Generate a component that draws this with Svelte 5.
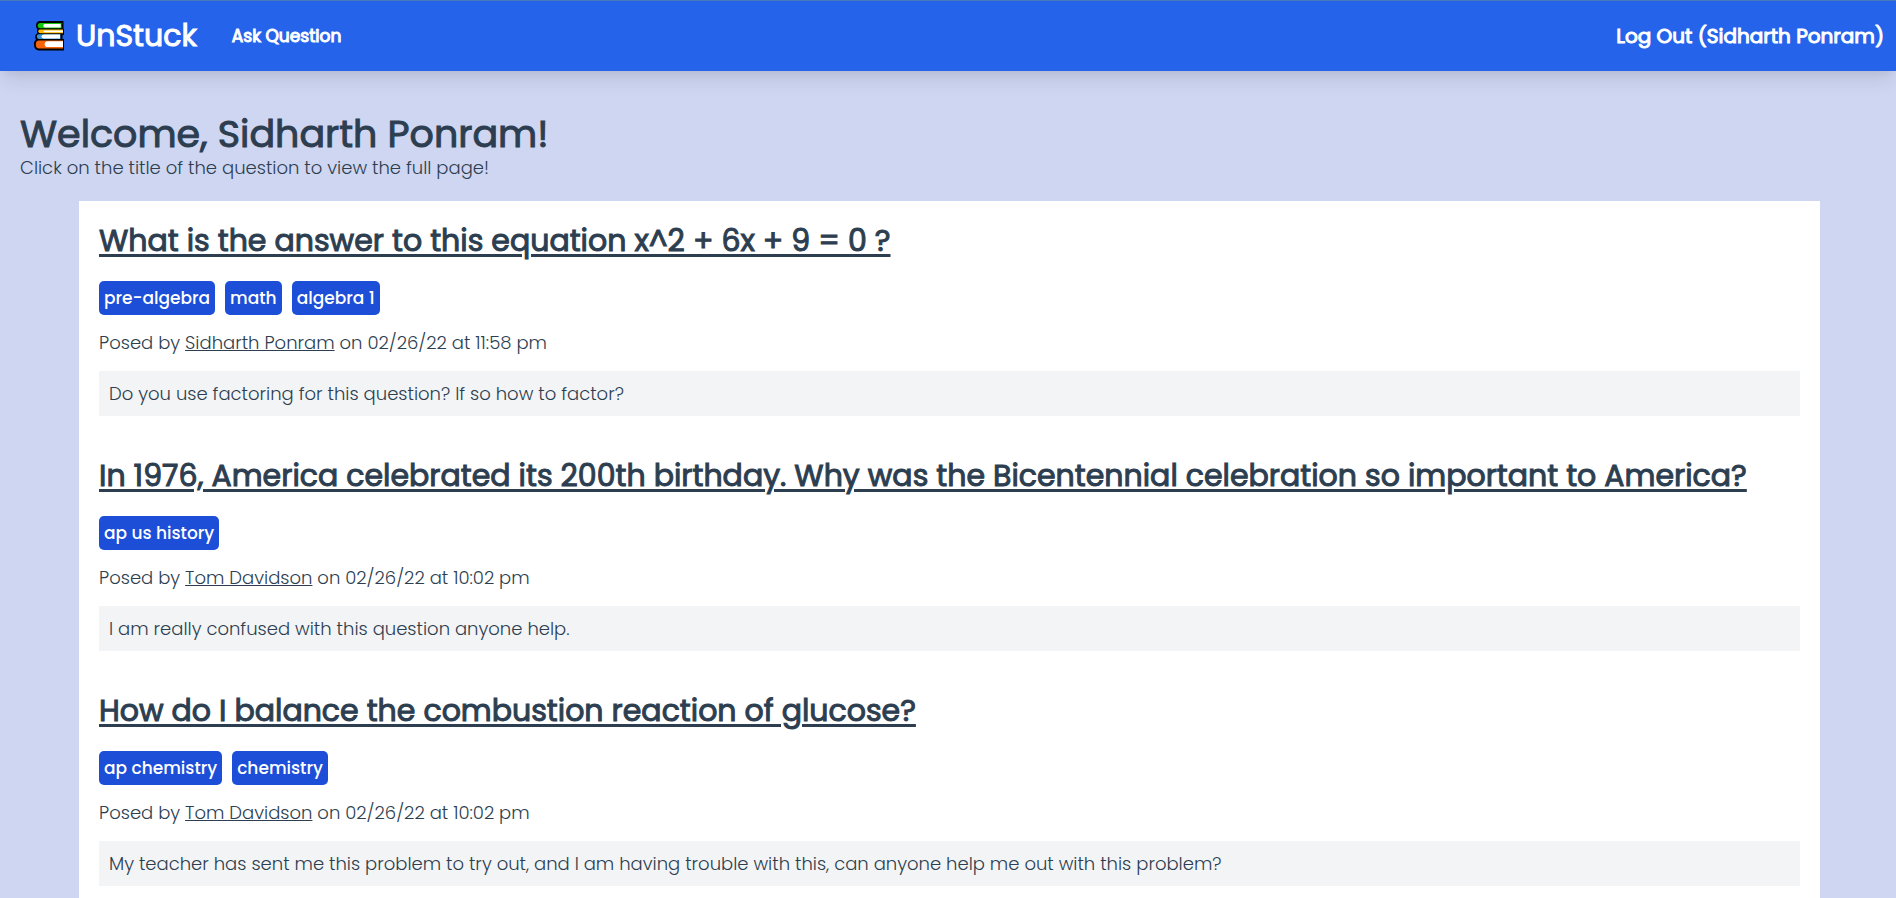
<script lang="ts">
  type Question = {
    id: number;
    title: string;
    tags: string[];
    author: string;
    posted: string;
    body: string;
  };

  const user = 'Sidharth Ponram';

  const questions: Question[] = [
    {
      id: 1,
      title: 'What is the answer to this equation x^2 + 6x + 9 = 0 ?',
      tags: ['pre-algebra', 'math', 'algebra 1'],
      author: 'Sidharth Ponram',
      posted: '02/26/22 at 11:58 pm',
      body: 'Do you use factoring for this question? If so how to factor?'
    },
    {
      id: 2,
      title: 'In 1976, America celebrated its 200th birthday. Why was the Bicentennial celebration so important to America?',
      tags: ['ap us history'],
      author: 'Tom Davidson',
      posted: '02/26/22 at 10:02 pm',
      body: 'I am really confused with this question anyone help.'
    },
    {
      id: 3,
      title: 'How do I balance the combustion reaction of glucose?',
      tags: ['ap chemistry', 'chemistry'],
      author: 'Tom Davidson',
      posted: '02/26/22 at 10:02 pm',
      body: 'My teacher has sent me this problem to try out, and I am having trouble with this, can anyone help me out with this problem?'
    }
  ];
</script>

<nav class="navbar">
  <a class="brand" href="/">
    <svg class="logo" viewBox="0 0 30 30" aria-hidden="true">
      <path d="M5 0H29.5V8H30V14H28.5V18H30V29.5H5Q0 29 0 23.5Q0 20 2 18.5Q1 17 1.3 14.5Q2 13 3.3 12.5Q2.5 10 3.5 8Q2 7 2 4.5Q2 1 5 0Z" fill="#000" />
      <path d="M6 2H27.5V7.3H6Q3.6 7 3.6 4.6T6 2Z" fill="#16c60c" />
      <path d="M5.5 8.5H29V12.2H6Q4.3 12 4.3 10.3T5.5 8.5Z" fill="#ffb900" />
      <path d="M5 13.3H26.5V18H5Q2.8 18 2.8 15.6T5 13.3Z" fill="#3a96dd" />
      <path d="M5 19.5H29V27.5H5Q1.8 27.5 1.8 23.5T5 19.5Z" fill="#f7630c" />
      <path d="M11 3H26.7V6.5H11Q9.3 6.5 9.3 4.7T11 3Z" fill="#fff" />
      <path d="M11 9.5H29V11.2H11Q9.5 11.2 9.5 10.3T11 9.5Z" fill="#fff" />
      <path d="M10 13.6H26V17.6H10Q7.5 17.6 7.5 15.6T10 13.6Z" fill="#fff" />
      <path d="M13.5 20.3H29V26H13.5Q10.7 26 10.7 23.2T13.5 20.3Z" fill="#fff" />
    </svg>
    <span>UnStuck</span>
  </a>
  <a class="ask" href="/ask">Ask Question</a>
  <button class="logout" type="button">Log Out ({user})</button>
</nav>

<main>
  <header class="welcome">
    <h1>Welcome, {user}!</h1>
    <p>Click on the title of the question to view the full page!</p>
  </header>

  <section class="questions">
    {#each questions as question (question.id)}
      <article>
        <h2><a href="/question/{question.id}">{question.title}</a></h2>
        <ul class="tags">
          {#each question.tags as tag}
            <li>{tag}</li>
          {/each}
        </ul>
        <p class="meta">
          Posed by <a href="/user/{question.author}">{question.author}</a> on {question.posted}
        </p>
        <p class="body">{question.body}</p>
      </article>
    {/each}
  </section>
</main>

<style>
  :global(body) {
    background: #cfd6f2;
    color: #2c3e50;
    font-family: Poppins, Inter, sans-serif;
    font-size: 18px;
    font-weight: 300;
    line-height: 24px;
  }

  h1, h2, p, ul {
    margin: 0;
    padding: 0;
  }

  a {
    color: inherit;
  }

  h1, h2, .brand, .ask, .logout {
    font-weight: 400;
    -webkit-text-stroke: 1px;
  }

  .navbar {
    display: flex;
    align-items: center;
    box-sizing: border-box;
    height: 71px;
    padding: 0 12px 0 34px;
    border-top: 1px solid #4a7ab5;
    background: #2563eb;
    color: #fff;
    box-shadow: 0 12px 19px -4px rgba(0, 0, 0, 0.1), 0 5px 8px -3px rgba(0, 0, 0, 0.05);
  }

  .brand {
    display: flex;
    align-items: center;
    gap: 12px;
    font-size: 30px;
    text-decoration: none;
  }

  .logo {
    width: 30px;
    height: 30px;
  }

  .ask {
    margin-left: 35px;
    font-size: 17px;
    text-decoration: none;
  }

  .logout {
    margin-left: auto;
    padding: 0;
    border: 0;
    background: none;
    color: inherit;
    font-family: inherit;
    font-size: 20px;
    cursor: pointer;
  }

  .welcome {
    padding: 40px 20px 21px;
  }

  h1 {
    font-size: 38px;
    line-height: 45px;
  }

  .questions {
    display: flex;
    flex-direction: column;
    gap: 40px;
    margin: 0 76px 0 79px;
    padding: 20px;
    background: #fff;
  }

  h2 {
    font-size: 30px;
    line-height: 40px;
  }

  h2 a {
    text-decoration-thickness: 3px;
    text-underline-offset: 3px;
  }

  .tags {
    display: flex;
    flex-wrap: wrap;
    gap: 10px;
    margin: 20px 0 16px;
    list-style: none;
  }

  .tags li {
    padding: 5px;
    border-radius: 5px;
    background: #1d4ed8;
    color: #fff;
    font-size: 17px;
    font-weight: 500;
  }

  .meta {
    margin-bottom: 16px;
  }

  .body {
    padding: 10px;
    background: #f3f4f6;
    line-height: 25px;
  }
</style>
